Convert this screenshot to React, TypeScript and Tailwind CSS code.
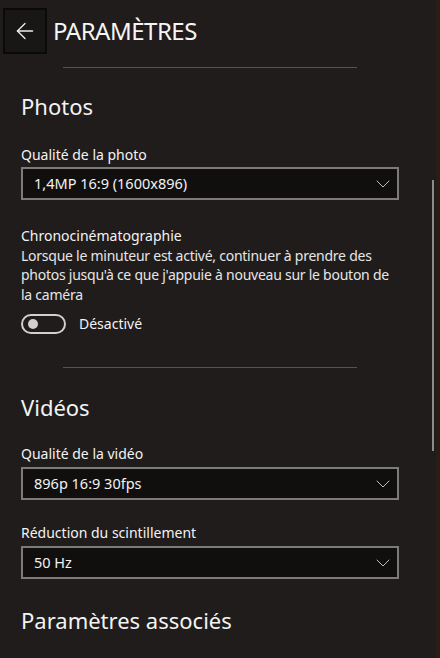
import { ArrowLeft, ChevronDown } from "lucide-react";

function Select({ value, className = "" }: { value: string; className?: string }) {
  return (
    <div
      className={
        "flex h-[33px] w-[378px] items-center justify-between border-2 border-[#7d7b79] bg-[#110f0e] pl-[11px] pr-[2px] text-[14.5px] text-[#f2f2f2] " +
        className
      }
    >
      <span>{value}</span>
      <ChevronDown size={24} strokeWidth={1} className="text-[#bdbdbd]" />
    </div>
  );
}

function Divider() {
  return <div className="mx-[63px] h-px w-[294px] bg-[#55524f]" />;
}

export default function App() {
  return (
    <div
      className="flex h-[658px] w-[440px] overflow-hidden bg-[#2a1c16]"
      style={{ fontFamily: '"Noto Sans", "Open Sans", sans-serif' }}
    >
      <div className="relative h-full w-[436px] bg-[#1f1c1b] text-[#f3f3f3]">
        {/* Header */}
        <div className="flex items-center pt-[8px] pl-[3px]">
          <button className="flex h-[46px] w-[44px] items-center justify-center border-2 border-[#0b0a0a] bg-[#191716]">
            <ArrowLeft size={26} strokeWidth={1.2} className="text-[#eeeeee]" />
          </button>
          <h1 className="ml-[6px] text-[24px] leading-none tracking-[-0.5px] text-[#f5f5f5]">PARAMÈTRES</h1>
        </div>

        <div className="mt-[13px]">
          <Divider />
        </div>

        {/* Photos */}
        <div className="pl-[21px]">
          <h2 className="mt-[24px] text-[22px] leading-[28px]">Photos</h2>
          <div className="mt-[25px] text-[14px] leading-[20px]">Qualité de la photo</div>
          <Select value="1,4MP 16:9 (1600x896)" className="mt-[2px]" />

          <div className="mt-[26px] text-[14px] leading-[19.5px]">
            <div>Chronocinématographie</div>
            <div className="w-[380px] tracking-[-0.25px] text-[#e6e6e6]">
              Lorsque le minuteur est activé, continuer à prendre des photos jusqu'à ce que j'appuie à nouveau sur le bouton de la caméra
            </div>
          </div>

          <div className="mt-[9px] flex items-center">
            <div className="flex h-[20px] w-[45px] items-center rounded-full border-2 border-[#d0d0d0] pl-[5px]">
              <div className="h-[10px] w-[10px] rounded-full bg-[#d0d0d0]" />
            </div>
            <span className="ml-[13px] text-[14px]">Désactivé</span>
          </div>
        </div>

        <div className="mt-[33px]">
          <Divider />
        </div>

        {/* Vidéos */}
        <div className="pl-[21px]">
          <h2 className="mt-[25px] text-[22px] leading-[28px]">Vidéos</h2>
          <div className="mt-[23px] text-[14px] leading-[20px]">Qualité de la vidéo</div>
          <Select value="896p 16:9 30fps" className="mt-[3px]" />
          <div className="mt-[23px] text-[14px] leading-[20px]">Réduction du scintillement</div>
          <Select value="50 Hz" className="mt-[3px]" />
          <h2 className="mt-[27px] text-[22px] leading-[28px]">Paramètres associés</h2>
        </div>

        {/* Scrollbar */}
        <div className="absolute right-[2px] top-[180px] h-[271px] w-[2px] bg-[#8e8c8a]" />
      </div>
    </div>
  );
}
